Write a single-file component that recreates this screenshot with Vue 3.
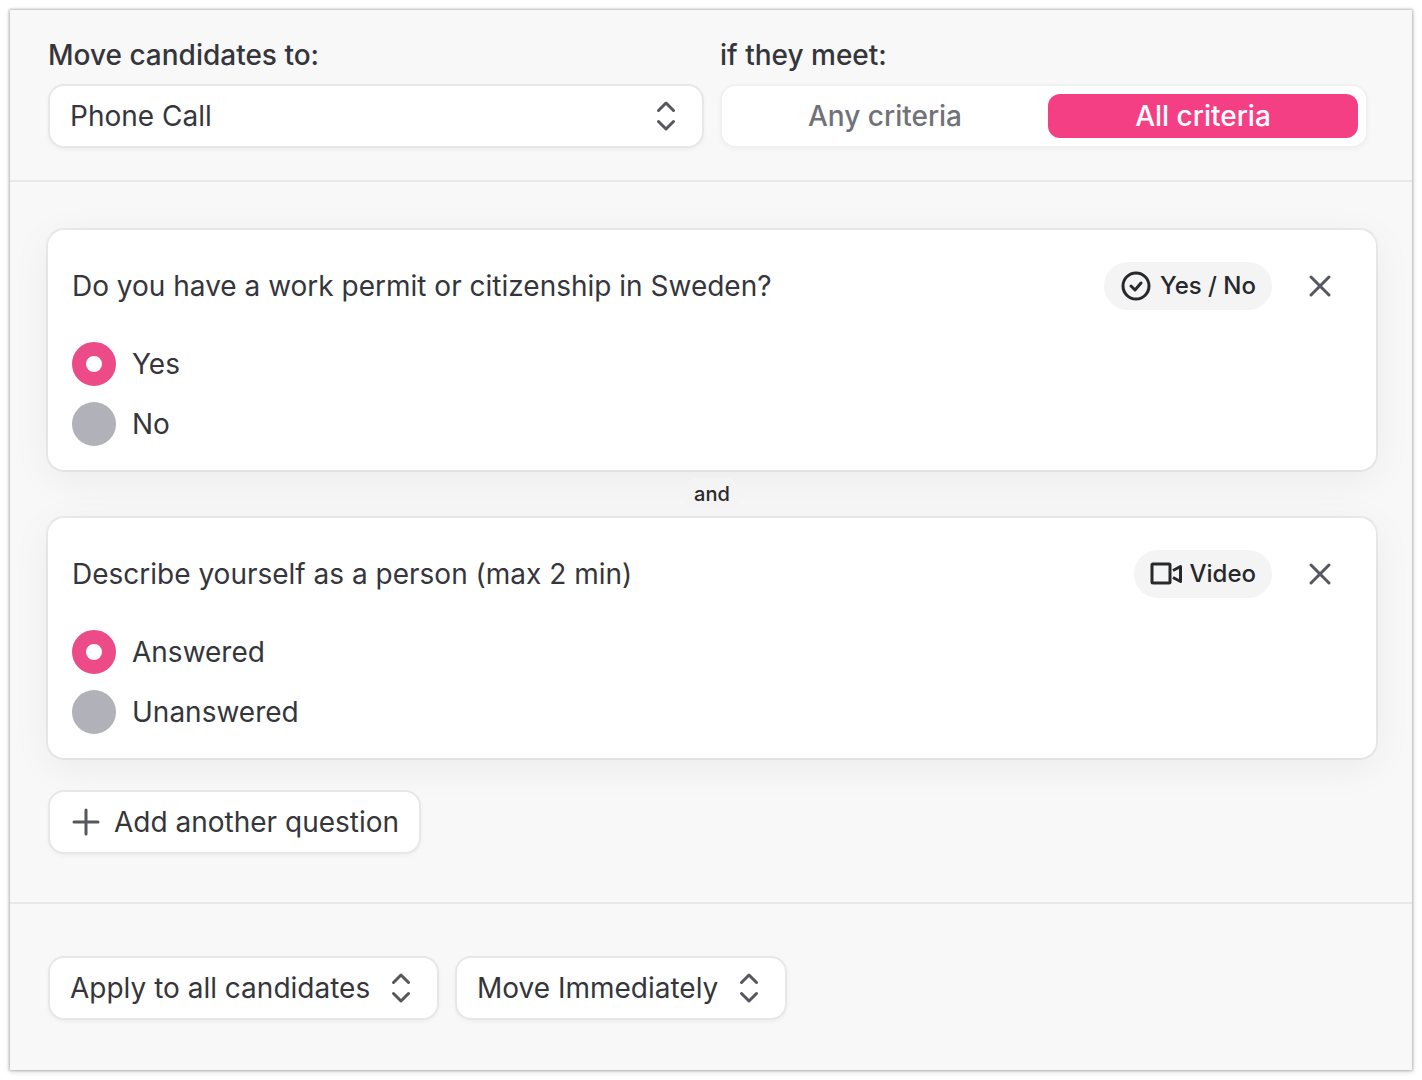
<script setup>
import { ref } from 'vue'

const match = ref('all')
const stage = ref('Phone Call')
const scope = ref('Apply to all candidates')
const timing = ref('Move Immediately')

const questions = ref([
  {
    id: 'permit',
    title: 'Do you have a work permit or citizenship in Sweden?',
    kind: 'Yes / No',
    icon: 'check',
    options: ['Yes', 'No'],
    answer: 'Yes',
  },
  {
    id: 'describe',
    title: 'Describe yourself as a person (max 2 min)',
    kind: 'Video',
    icon: 'video',
    options: ['Answered', 'Unanswered'],
    answer: 'Answered',
  },
])

function remove(id) {
  questions.value = questions.value.filter((q) => q.id !== id)
}
</script>

<template>
  <main class="panel">
    <header class="top">
      <div class="field">
        <label class="caption" for="stage">Move candidates to:</label>
        <div class="picker">
          <select id="stage" v-model="stage" class="box select wide">
            <option>Phone Call</option>
          </select>
          <svg class="chevrons" viewBox="0 0 20 32" aria-hidden="true">
            <path d="m2.5 10.5 7.5-7.500 7.500 7.500M2.500 21.500 10 29l7.500-7.500" />
          </svg>
        </div>
      </div>
      <div class="field">
        <span id="meet" class="caption">if they meet:</span>
        <div class="segments" role="group" aria-labelledby="meet">
          <button type="button" :class="{ on: match === 'any' }" :aria-pressed="match === 'any'" @click="match = 'any'">Any criteria</button>
          <button type="button" :class="{ on: match === 'all' }" :aria-pressed="match === 'all'" @click="match = 'all'">All criteria</button>
        </div>
      </div>
    </header>

    <section class="questions">
      <template v-for="(q, i) in questions" :key="q.id">
        <div v-if="i > 0" class="joiner"><span>and</span></div>
        <article class="card">
          <div class="head">
            <h2 :id="q.id">{{ q.title }}</h2>
            <span class="pill">
              <svg v-if="q.icon === 'check'" class="check" viewBox="0 0 32 32" aria-hidden="true">
                <circle cx="16" cy="16" r="13" />
                <path d="m11 16 4 4 6-7" />
              </svg>
              <svg v-else class="video" viewBox="0 0 32 24" aria-hidden="true">
                <rect x="2" y="2" width="18" height="19" rx="1" />
                <path class="lens" d="m23 8.500 7.500-4v15l-7.500-4" />
              </svg>
              {{ q.kind }}
            </span>
            <button type="button" class="close" aria-label="Remove question" @click="remove(q.id)">
              <svg viewBox="0 0 24 24" aria-hidden="true"><path d="m3 3 18 18M21 3 3 21" /></svg>
            </button>
          </div>
          <div class="options" role="radiogroup" :aria-labelledby="q.id">
            <label v-for="o in q.options" :key="o" class="option">
              <input v-model="q.answer" type="radio" :name="q.id" :value="o" />
              {{ o }}
            </label>
          </div>
        </article>
      </template>
      <button type="button" class="box add">
        <svg viewBox="0 0 28 28" aria-hidden="true"><path d="M14 2v24M2 14h24" /></svg>
        Add another question
      </button>
    </section>

    <footer class="bottom">
      <div class="picker">
        <select v-model="scope" class="box select" aria-label="Applies to">
          <option>Apply to all candidates</option>
        </select>
        <svg class="chevrons" viewBox="0 0 20 32" aria-hidden="true">
          <path d="m2.500 10.500 7.500-7.500 7.500 7.500M2.500 21.500 10 29l7.500-7.500" />
        </svg>
      </div>
      <div class="picker">
        <select v-model="timing" class="box select" aria-label="Timing">
          <option>Move Immediately</option>
        </select>
        <svg class="chevrons" viewBox="0 0 20 32" aria-hidden="true">
          <path d="m2.500 10.500 7.500-7.500 7.500 7.500M2.500 21.500 10 29l7.500-7.500" />
        </svg>
      </div>
    </footer>
  </main>
</template>

<style>
body {
  background: #fff;
}
</style>

<style scoped>
* {
  box-sizing: border-box;
}
.panel {
  margin: 10px;
  background: #f8f8f8;
  box-shadow: 0 0 2px 1px rgba(0, 0, 0, 0.2), 0 1px 6px rgba(0, 0, 0, 0.2);
  color: #35363c;
  font-family: Inter, "Liberation Sans", sans-serif;
  font-size: 28px;
  line-height: 34px;
}
button,
select {
  margin: 0;
  font: inherit;
  color: inherit;
  cursor: pointer;
}
svg {
  display: block;
  flex: none;
  fill: none;
  stroke: #55565e;
  stroke-width: 3;
  stroke-linecap: round;
  stroke-linejoin: round;
}
.top {
  display: grid;
  grid-template-columns: 82fr 81fr;
  gap: 16px;
  padding: 28px 44px 32px 38px;
  border-bottom: 2px solid #e8e8e8;
}
.field {
  display: flex;
  flex-direction: column;
  gap: 12px;
}
.caption {
  font-weight: 500;
}
.box {
  height: 64px;
  border: 2px solid #e7e7e8;
  border-radius: 16px;
  background: #fff;
  box-shadow: 0 2px 4px rgba(0, 0, 0, 0.04);
}
.picker {
  position: relative;
}
.select {
  display: block;
  appearance: none;
  padding: 0 66px 0 20px;
}
.wide {
  width: 100%;
}
.chevrons {
  position: absolute;
  top: 16px;
  right: 28px;
  width: 20px;
  height: 32px;
  pointer-events: none;
}
.segments {
  display: flex;
  gap: 8px;
  height: 64px;
  padding: 8px;
  border: 2px solid #f1f1f1;
  border-radius: 16px;
  background: #fff;
  box-shadow: 0 2px 4px rgba(0, 0, 0, 0.03);
}
.segments button {
  flex: 1;
  padding: 0;
  border: 0;
  border-radius: 12px;
  background: none;
  color: #71717a;
  font-weight: 500;
}
.segments .on {
  background: #f53f85;
  color: #fff;
}
.questions {
  padding: 48px 36px 48px 38px;
  border-bottom: 2px solid #e8e8e8;
}
.card {
  padding: 32px 24px 24px;
  border-radius: 16px;
  background: #fff;
  box-shadow: 0 0 0 2px rgba(0, 0, 0, 0.05), 0 8px 40px rgba(0, 0, 0, 0.06);
}
.head {
  display: flex;
  align-items: center;
  margin-bottom: 32px;
}
h2 {
  flex: 1;
  margin: 0;
  font-size: 28px;
  font-weight: 400;
}
.pill {
  display: flex;
  align-items: center;
  gap: 8px;
  height: 48px;
  padding: 0 16px;
  border-radius: 24px;
  background: #f4f4f4;
  color: #27282b;
  font-size: 24px;
  font-weight: 500;
}
.pill svg {
  stroke: #27282b;
}
.check {
  width: 32px;
  height: 32px;
}
.video {
  width: 32px;
  height: 24px;
}
.lens {
  stroke-linecap: butt;
}
.close {
  display: grid;
  place-items: center;
  width: 48px;
  height: 48px;
  margin: 0 8px 0 24px;
  padding: 0;
  border: 0;
  background: none;
}
.close svg {
  width: 24px;
  height: 24px;
}
.options {
  display: flex;
  flex-direction: column;
  gap: 16px;
}
.option {
  display: flex;
  align-items: center;
  gap: 16px;
}
.option input {
  appearance: none;
  width: 44px;
  height: 44px;
  margin: 0;
  border-radius: 50%;
  background: #b1b2b9;
}
.option input:checked {
  border: 14px solid #ed4b87;
  background: #fff;
}
.joiner {
  position: relative;
  display: flex;
  align-items: center;
  justify-content: center;
  height: 48px;
}
.joiner span {
  padding: 0 12px;
  border-radius: 16px;
  background: #f4f4f4;
  color: #27282b;
  font-size: 20px;
  font-weight: 500;
  line-height: 32px;
}
.add {
  display: flex;
  align-items: center;
  gap: 14px;
  margin-top: 32px;
  padding: 0 20px 0 22px;
}
.add svg {
  width: 28px;
  height: 28px;
}
.bottom {
  display: flex;
  gap: 16px;
  padding: 52px 38px 50px;
}
</style>
